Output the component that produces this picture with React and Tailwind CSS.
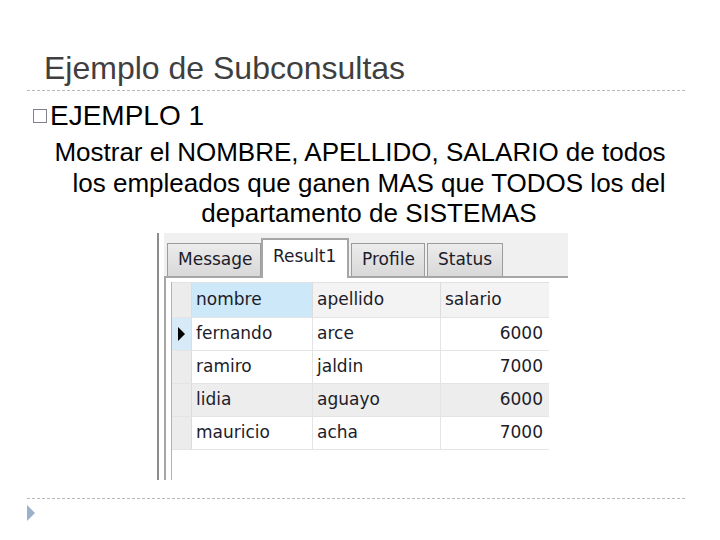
import React from "react";

const rows = [
  { nombre: "fernando", apellido: "arce", salario: "6000", current: true },
  { nombre: "ramiro", apellido: "jaldin", salario: "7000" },
  { nombre: "lidia", apellido: "aguayo", salario: "6000", shaded: true },
  { nombre: "mauricio", apellido: "acha", salario: "7000" },
];

const tabCls = "h-[33px] px-[10px] flex items-center border border-[#9c9c9c] border-b-0 bg-gradient-to-b from-[#ececec] to-[#d8d8d8] text-[#1c1c2a]";

function Grid() {
  return (
    <div className="h-full border-l border-[#b4b4b4]">
      <div className="w-[377px] border-t border-[#e2e2e2]">
        <div className="flex h-[34px]">
          <div className="w-[20px] bg-[#ececec] border-r border-[#dcdcdc]" />
          <div className="w-[121px] bg-[#cde8f8] border-r border-[#dcdcdc] pl-[4px] flex items-center">nombre</div>
          <div className="w-[128px] bg-[#f3f3f3] border-r border-[#dcdcdc] pl-[4px] flex items-center">apellido</div>
          <div className="w-[108px] bg-[#f3f3f3] pl-[4px] flex items-center">salario</div>
        </div>
        {rows.map((r) => (
          <div key={r.nombre} className={`flex h-[33px] border-t border-[#e4e4e4] ${r.shaded ? "bg-[#ededed]" : "bg-white"}`}>
            <div className={`w-[20px] border-r border-[#dcdcdc] flex items-center justify-center ${r.current ? "bg-[#d6ebf7]" : "bg-[#ececec]"}`}>
              {r.current && (
                <svg width="9" height="16" viewBox="0 0 9 16"><path d="M1 1 L8 8 L1 15 Z" fill="#000" /></svg>
              )}
            </div>
            <div className="w-[121px] border-r border-[#e4e4e4] pl-[4px] flex items-center">{r.nombre}</div>
            <div className="w-[128px] border-r border-[#e4e4e4] pl-[4px] flex items-center">{r.apellido}</div>
            <div className="w-[108px] pr-[6px] flex items-center justify-end">{r.salario}</div>
          </div>
        ))}
        <div className="border-t border-[#e4e4e4] w-[377px]" />
      </div>
    </div>
  );
}

export default function App() {
  return (
    <div className="w-[720px] h-[540px] bg-white overflow-hidden font-['Liberation_Sans',Arial,sans-serif]">
      <div className="pt-[50px] pl-[44px] text-[32px] leading-[36px] text-[#3f3f3f]">Ejemplo de Subconsultas</div>
      <div className="ml-[27px] mt-[4px] w-[658px] border-t border-dashed border-[#b8b8b8]" />

      <div className="mt-[10px] ml-[33px] flex items-center text-[28px] leading-[30px] text-black">
        <span className="w-[14px] h-[14px] border border-[#7d828c] mr-[3px]" />
        <span>EJEMPLO 1</span>
      </div>

      <div className="mt-[6px] text-center text-[26px] leading-[31px] text-black">
        <div className="pl-[0px]">Mostrar el NOMBRE, APELLIDO, SALARIO de todos</div>
        <div className="pl-[18px]">los empleados que ganen MAS que TODOS los del</div>
        <div className="pl-[18px] leading-[28px]">departamento de SISTEMAS</div>
      </div>

      {/* pasted result window */}
      <div className="mt-[6px] ml-[157px] w-[411px] h-[247px] flex overflow-hidden font-['DejaVu_Sans',sans-serif] text-[17px] text-[#1c1c2a]">
        <div className="w-[7px] border-l-2 border-[#8c8c8c] bg-white" />
        <div className="flex-1 flex flex-col bg-[#f0f0f0]">
          <div className="h-[43px] flex items-end pl-[3px] pt-[4px]">
            <div className={`${tabCls} w-[94px]`}>Message</div>
            <div className="h-[40px] w-[88px] px-[10px] pt-[4px] border-2 border-b-0 border-[#a6a6a6] bg-white -mb-[2px] relative z-10">Result1</div>
            <div className={`${tabCls} w-[74px] ml-[2px]`}>Profile</div>
            <div className={`${tabCls} w-[76px] ml-[2px]`}>Status</div>
          </div>
          <div className="flex-1 border-l-2 border-t-2 border-[#a6a6a6] bg-white pl-[5px] pt-[4px]">
            <Grid />
          </div>
        </div>
      </div>

      <div className="mt-[18px] ml-[27px] w-[658px] border-t border-dashed border-[#b8b8b8]" />
      <svg className="ml-[26px] mt-[6px]" width="10" height="16" viewBox="0 0 10 16">
        <path d="M1 0 L9 8 L1 16 Z" fill="#9bb1cb" />
      </svg>
    </div>
  );
}
